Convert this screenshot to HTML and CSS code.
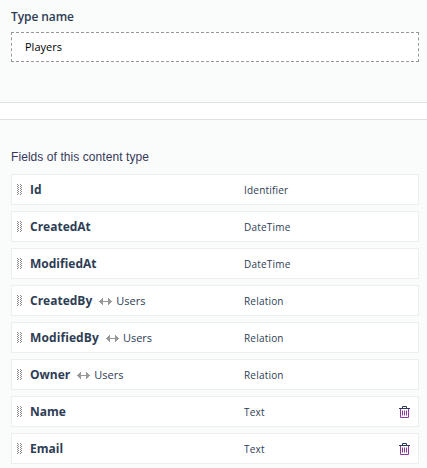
FILE: index.html
```
<!DOCTYPE html>
<html lang="en">
<head>
<meta charset="utf-8">
<title>Content type</title>
<link rel="stylesheet" href="styles.css">
</head>
<body>
<svg class="defs" width="0" height="0">
  <symbol id="grip" viewBox="0 0 5 11"><path d="M0 0h1v1H0zM3 0h1v1H3zM1 1h1v1H1zM4 1h1v1H4zM0 2h1v1H0zM3 2h1v1H3zM1 3h1v1H1zM4 3h1v1H4zM0 4h1v1H0zM3 4h1v1H3zM1 5h1v1H1zM4 5h1v1H4zM0 6h1v1H0zM3 6h1v1H3zM1 7h1v1H1zM4 7h1v1H4zM0 8h1v1H0zM3 8h1v1H3zM1 9h1v1H1zM4 9h1v1H4zM0 10h1v1H0zM3 10h1v1H3z" fill="#8c8c8c"/></symbol>
  <symbol id="link" viewBox="0 0 13 7"><path d="M0 3h1V2h1V1h1V0h1v3h5V0h1v1h1v1h1v1h1v1h-1v1h-1v1h-1v1H9V4H4v3H3V6H2V5H1V4H0z" fill="#999"/></symbol>
  <symbol id="trash" viewBox="0 0 11 12"><path d="M1.5 3v8.5h8V3M3.5 4.5v5M5.5 4.5v5M7.5 4.5v5" fill="none" stroke="#8a3a9c"/><path d="M0 2.5h11M3.5 2V.5h4V2" fill="none" stroke="#2b3a5c"/></symbol>
</svg>
<section class="panel name-panel">
  <label class="label" for="type-name">Type name</label>
  <input class="type-input" id="type-name" value="Players">
</section>
<section class="panel fields-panel">
  <h2 class="heading">Fields of this content type</h2>
  <ul class="fields">
    <li class="field"><svg class="grip"><use href="#grip"/></svg><div class="title"><b>Id</b></div><span class="kind">Identifier</span></li>
    <li class="field"><svg class="grip"><use href="#grip"/></svg><div class="title"><b>CreatedAt</b></div><span class="kind">DateTime</span></li>
    <li class="field"><svg class="grip"><use href="#grip"/></svg><div class="title"><b>ModifiedAt</b></div><span class="kind">DateTime</span></li>
    <li class="field"><svg class="grip"><use href="#grip"/></svg><div class="title"><b>CreatedBy</b><svg class="link"><use href="#link"/></svg><span class="target">Users</span></div><span class="kind">Relation</span></li>
    <li class="field"><svg class="grip"><use href="#grip"/></svg><div class="title"><b class="wide">ModifiedBy</b><svg class="link"><use href="#link"/></svg><span class="target">Users</span></div><span class="kind">Relation</span></li>
    <li class="field"><svg class="grip"><use href="#grip"/></svg><div class="title"><b>Owner</b><svg class="link"><use href="#link"/></svg><span class="target">Users</span></div><span class="kind">Relation</span></li>
    <li class="field"><svg class="grip"><use href="#grip"/></svg><div class="title"><b>Name</b></div><span class="kind">Text</span><svg class="trash"><use href="#trash"/></svg></li>
    <li class="field"><svg class="grip"><use href="#grip"/></svg><div class="title"><b>Email</b></div><span class="kind">Text</span><svg class="trash"><use href="#trash"/></svg></li>
  </ul>
</section>
</body>
</html>
```
FILE: styles.css
```
* { box-sizing: border-box; }
body {
  margin: 0;
  height: 468px;
  overflow: hidden;
  background: #fff;
  color: #2e3d54;
  font-family: "Open Sans", sans-serif;
}
.defs { display: none; }
.panel { background: #fafcfb; padding: 0 8px 0 11px; }
.name-panel {
  height: 103px;
  padding-top: 8px;
  border-bottom: 1px solid #dce3e2;
}
.label {
  display: block;
  height: 24px;
  font-size: 12px;
  font-weight: 600;
  letter-spacing: -0.08px;
  line-height: 18px;
}
.type-input {
  display: block;
  width: 408px;
  height: 30px;
  padding: 0 13px 1px;
  border: 1px dashed #999;
  background: #fff;
  color: #000;
  font: 11px "Open Sans", sans-serif;
}
.fields-panel {
  margin-top: 16px;
  height: 349px;
  border-top: 1px solid #dce3e2;
}
.heading {
  margin: 0;
  padding-top: 28px;
  height: 54px;
  color: #37375a;
  font: 12px/18px "Liberation Sans", sans-serif;
  letter-spacing: 0.07px;
}
.fields {
  display: flex;
  flex-direction: column;
  gap: 6px;
  margin: 0;
  padding: 0;
  list-style: none;
}
.field {
  display: grid;
  grid-template-columns: 13px 214px 1fr 11px;
  align-items: center;
  height: 31px;
  padding: 0 8px 0 5px;
  border: 1px solid #ebefee;
  background: #fff;
}
.grip { width: 5px; height: 11px; }
.title { display: flex; align-items: center; font-size: 12px; }
.title b { font-weight: 700; }
.title .wide { letter-spacing: 0.1px; }
.link { width: 13px; height: 7px; margin: 1px 4px 0 7px; }
.target { font-size: 11px; }
.kind { font-size: 10px; letter-spacing: 0.2px; padding-top: 1px; }
.trash { width: 11px; height: 12px; }
```
